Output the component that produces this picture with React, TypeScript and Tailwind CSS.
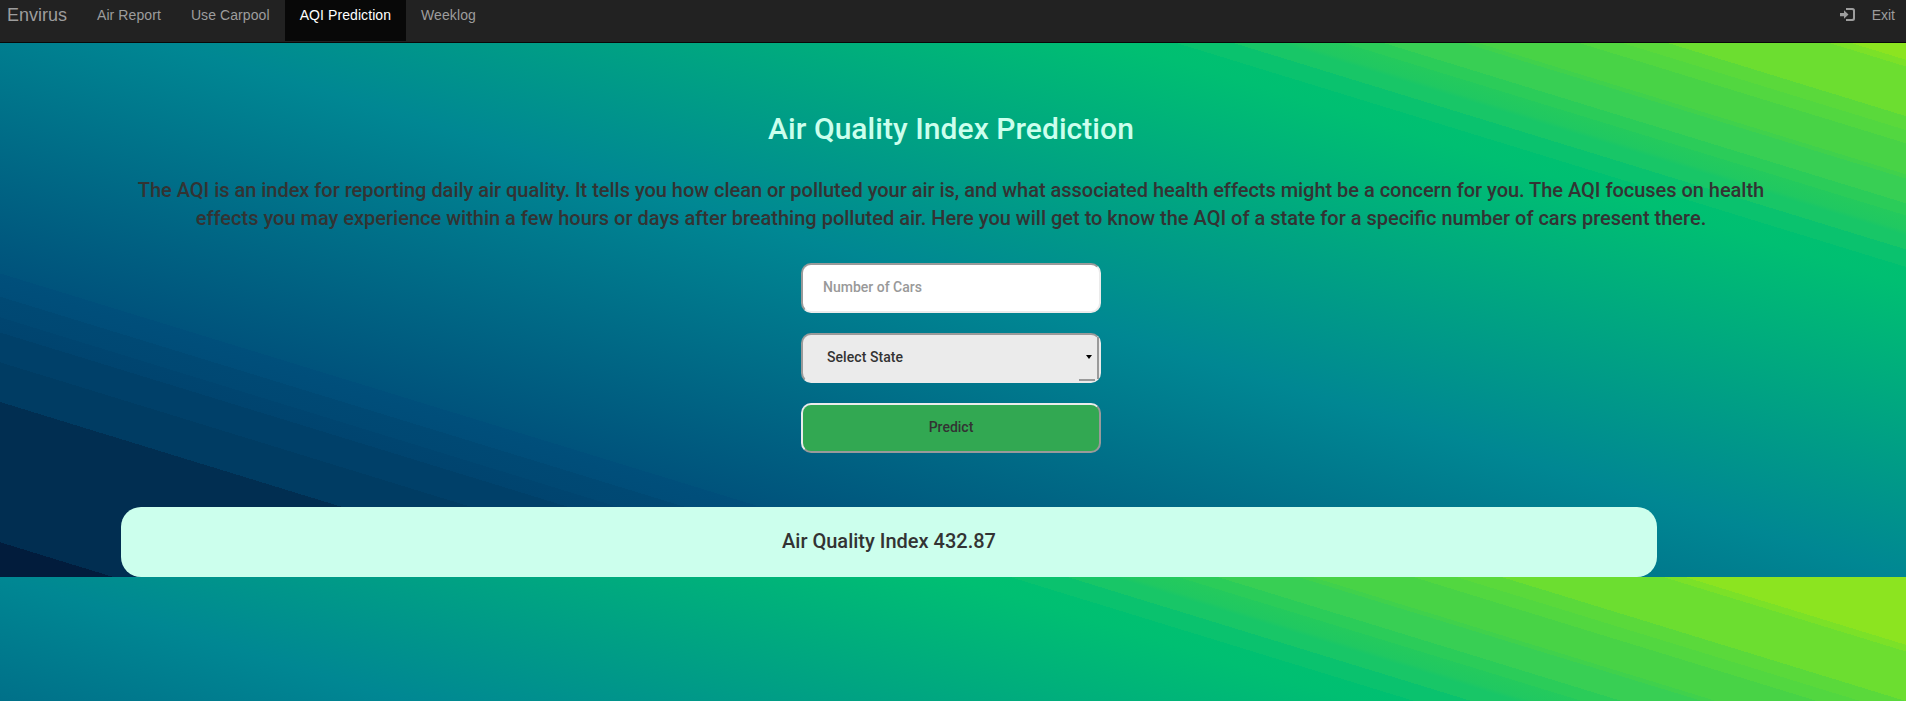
const links = ["Air Report", "Use Carpool", "AQI Prediction", "Weeklog"];

function ExitIcon() {
  return (
    <svg width="15" height="13" viewBox="0 0 15 13" fill="#9d9d9d">
      <path d="M0 5h4V2.2L8.5 6.5 4 10.8V8.2H0z" />
      <path d="M6 0h6.5A2.5 2.5 0 0 1 15 2.5v8a2.5 2.5 0 0 1-2.5 2.5H6v-2h6a1 1 0 0 0 1-1V3a1 1 0 0 0-1-1H6z" />
    </svg>
  );
}

export default function App() {
  return (
    <div className="h-[701px] w-full overflow-hidden bg-[image:linear-gradient(to_right_top,#021c3c_0%,#021c3c_2.97%,#012e51_2.97%,#012e51_14.96%,#003c63_14.96%,#003c63_18.35%,#004069_18.35%,#004069_20.9%,#00446f_20.9%,#004570_22.2%,#004873_22.2%,#004974_23.96%,#004d79_23.96%,#004f7b_25.95%,#00537c_25.95%,#008793_50%,#00bf72_75%,#00c071_76.5%,#0ac26e_76.5%,#0ac26e_78%,#18c667_78%,#18c667_79.2%,#20c861_79.6%,#24ca5d_80.9%,#2bcc59_80.9%,#2bcc59_81.94%,#38cf54_81.94%,#38cf54_84.05%,#40d14c_84.05%,#40d14c_84.42%,#48d346_84.42%,#48d346_87.07%,#52d740_87.07%,#52d740_88.2%,#5ad93b_88.2%,#5ad93b_89.39%,#6cde30_89.39%,#6cde30_93.63%,#7be128_93.63%,#7be128_94.2%,#8ce420_94.2%,#8ce420_100%)] bg-[length:100%_585px] bg-[position:0_-8px] font-['Roboto','Liberation_Sans',sans-serif] text-[#333]">
      <nav className="flex h-[43px] items-start justify-between border-b border-[#080808] bg-[#222] pl-[7px] font-['Liberation_Sans',sans-serif] text-[14px] leading-5 text-[#9d9d9d]">
        <div className="flex">
          <span className="w-[75px] pt-[5px] text-[18px]">Envirus</span>
          {links.map((link) => (
            <a
              key={link}
              className={
                link === "AQI Prediction"
                  ? "h-[41px] bg-[#080808] px-[15px] pt-[5px] tracking-[0.085px] text-white"
                  : "h-[41px] px-[15px] pt-[5px] tracking-[0.085px]"
              }
            >
              {link}
            </a>
          ))}
        </div>
        <div className="flex pr-[11px] pt-[5px]">
          <span className="mr-[17px] pt-[3px]"><ExitIcon /></span>
          <a>Exit</a>
        </div>
      </nav>
      <main>
        <h2 className="mt-[69px] pr-1 text-center text-[30px] font-medium leading-[33px] tracking-[0.05px] text-[#ccffed]">
          Air Quality Index Prediction
        </h2>
        <p className="mx-auto mt-[31px] w-[1660px] pr-1 text-center text-[20px] font-medium leading-7">
          <span className="tracking-[-0.025px]">The AQI is an index for reporting daily air quality. It tells you how clean or polluted your air is, and what associated health effects might be a concern for you. The AQI focuses on health</span>
          <br />
          effects you may experience within a few hours or days after breathing polluted air. Here you will get to know the AQI of a state for a specific number of cars present there.
        </p>
        <form className="ml-[801px] mt-[31px] flex w-[300px] flex-col gap-5 text-[14px] font-medium">
          <input
            placeholder="Number of Cars"
            className="h-[50px] rounded-[10px] border-2 border-b-[#ebebeb] border-l-[#9a9a9a] border-r-[#ebebeb] border-t-[#9a9a9a] bg-white px-5 pb-0.5 placeholder:text-[#999]"
          />
          <div className="relative flex h-[50px] items-center justify-between rounded-[10px] border-2 border-b-[#ebebeb] border-l-[#9a9a9a] border-r-[#ebebeb] border-t-[#9a9a9a] bg-[#ebebeb] pb-0.5 pl-6 pr-[7px]">
            <span className="tracking-[0.06px]">Select State</span>
            <svg width="6" height="4" viewBox="0 0 6 4"><path d="M0 0h6L3 4z" /></svg>
            <svg className="absolute right-0 top-0" width="20" height="46" viewBox="0 0 20 46" fill="none" stroke="#9a9a9a" strokeWidth="2">
              <path d="M19 2v42M0 45h16" />
            </svg>
          </div>
          <button className="h-[50px] rounded-[10px] border-2 border-b-[#9a9a9a] border-l-[#ebebeb] border-r-[#9a9a9a] border-t-[#ebebeb] bg-[#32a852] pb-0.5">
            Predict
          </button>
        </form>
        <div className="ml-[121px] mt-[54px] h-[70px] w-[1536px] rounded-[20px] bg-[#ccffed] pt-5 text-center text-[20px] font-medium leading-7">
          Air Quality Index 432.87
        </div>
      </main>
    </div>
  );
}
